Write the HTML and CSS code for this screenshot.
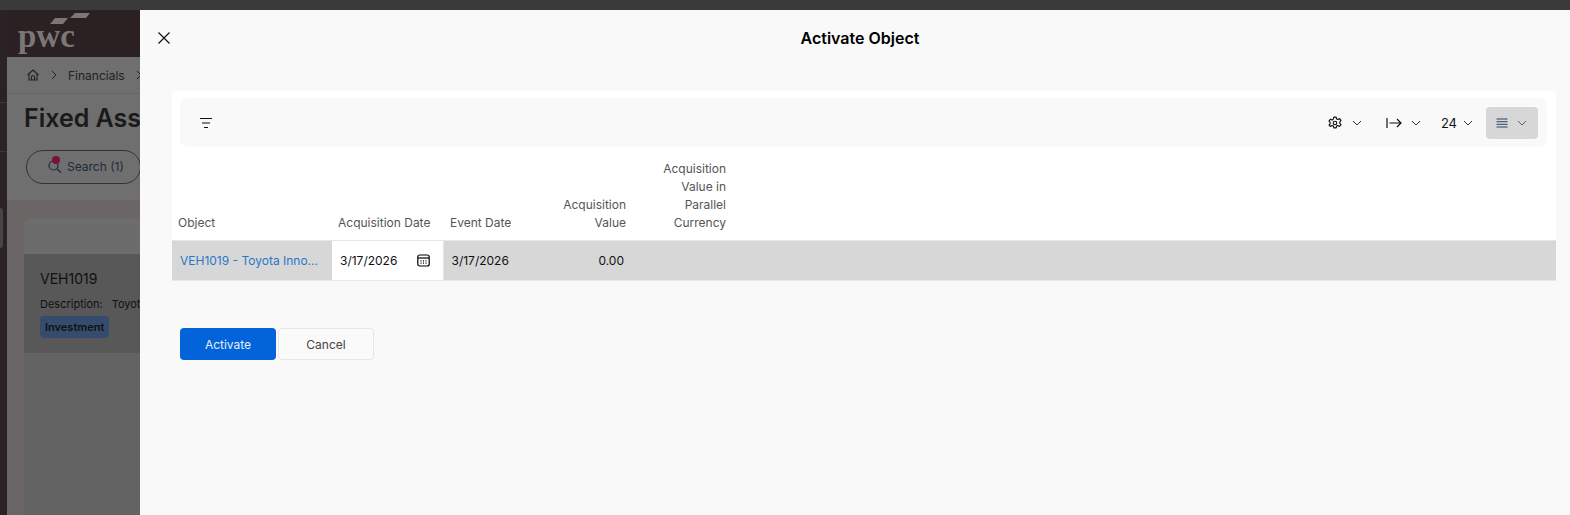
FILE: index.html
```html
<!DOCTYPE html>
<html lang="en">
<head>
<meta charset="utf-8">
<title>Activate Object</title>
<link rel="stylesheet" href="styles.css">
</head>
<body>
<div class="topbar"></div>
<div class="stage">
  <div class="app">
    <div class="rail"><i></i><i></i><b class="rail-tab"></b></div>
    <div class="app-main">
      <header class="brand">
        <svg class="logo" width="84" height="44" viewBox="0 0 84 44"><path d="M57 0h15l-4 5H52zM37 5h13l-5 6H32z" fill="#7c7775"/><text x="0" y="34" class="logo-text">pwc</text></svg>
      </header>
      <nav class="crumbs">
        <svg width="14" height="14" viewBox="0 0 14 14" fill="none" stroke="#222" stroke-width="1.1"><path d="M1.500 7 7 2l5.500 5M3 6v6h8V6M5.500 12V9a1.500 1.500 0 0 1 3 0v3"/></svg>
        <svg width="8" height="10" viewBox="0 0 8 10" fill="none" stroke="#222"><path d="m2 1 4 4-4 4"/></svg>
        <span>Financials</span>
        <svg width="8" height="10" viewBox="0 0 8 10" fill="none" stroke="#222"><path d="m2 1 4 4-4 4"/></svg>
      </nav>
      <h1 class="page-title">Fixed Assets</h1>
      <div class="search-wrap">
        <button class="search-btn">
          <span class="search-icon">
            <svg width="16" height="16" viewBox="0 0 16 16" fill="none" stroke="#1d2a3a" stroke-width="1.200"><circle cx="6.500" cy="7.500" r="4.500"/><path d="m10 11 4 3.500"/></svg>
            <i class="dot"></i>
          </span>
          Search (1)
        </button>
      </div>
      <section class="bg-area">
        <div class="bg-card">
          <div class="bg-card-head"></div>
          <div class="bg-row">
            <div class="bg-id">VEH1019</div>
            <div class="bg-desc"><span>Description:</span><span>Toyota Innova</span></div>
            <span class="tag">Investment</span>
          </div>
        </div>
      </section>
    </div>
  </div>

  <aside class="modal">
    <div class="modal-head">
      <button class="close" aria-label="Close">
        <svg width="14" height="14" viewBox="0 0 14 14" fill="none" stroke="#111" stroke-width="1.200"><path d="m1.500 1.500 11 11M12.500 1.500l-11 11"/></svg>
      </button>
      <h2 class="modal-title">Activate Object</h2>
    </div>
    <div class="panel">
      <div class="toolbar">
        <button class="tool filter" aria-label="Filter">
          <svg width="14" height="12" viewBox="0 0 14 12" fill="none" stroke="#111" stroke-width="1.200"><path d="M1 1.500h12M3 6h8M5 10.500h4"/></svg>
        </button>
        <div class="tools-right">
          <button class="tool tool-gear" aria-label="Settings">
            <svg width="14" height="14" viewBox="0 0 24 24" fill="none" stroke="#111" stroke-width="2"><circle cx="12" cy="12" r="3"/><path d="M10 2h4l.7 3 2.300 1 2.700-1.500 2.600 3.200-2 2.300v2.400l2 2.300-2.600 3.200-2.700-1.500-2.300 1-.7 3h-4l-.7-3-2.300-1-2.700 1.500L1.700 15.700l2-2.300V11l-2-2.300 2.600-3.200L7 7l2.300-2z" stroke-linejoin="round"/></svg>
            <svg class="chev" width="10" height="6" viewBox="0 0 10 6" fill="none" stroke="#333"><path d="m1 1 4 4 4-4"/></svg>
          </button>
          <button class="tool tool-width" aria-label="Column width">
            <svg width="16" height="12" viewBox="0 0 16 12" fill="none" stroke="#111" stroke-width="1.200"><path d="M1 1v10M3.500 6H15M11 2l4 4-4 4"/></svg>
            <svg class="chev" width="10" height="6" viewBox="0 0 10 6" fill="none" stroke="#333"><path d="m1 1 4 4 4-4"/></svg>
          </button>
          <button class="tool tool-size">24
            <svg class="chev" width="10" height="6" viewBox="0 0 10 6" fill="none" stroke="#333"><path d="m1 1 4 4 4-4"/></svg>
          </button>
          <button class="tool tool-density" aria-label="Density">
            <svg width="12" height="10" viewBox="0 0 12 10" fill="none" stroke="#2c4465"><path d="M.5 1h11M.5 3.700h11M.5 6.300h11M.5 9h11"/></svg>
            <svg class="chev" width="10" height="6" viewBox="0 0 10 6" fill="none" stroke="#55647a"><path d="m1 1 4 4 4-4"/></svg>
          </button>
        </div>
      </div>
      <table class="grid">
        <thead>
          <tr>
            <th class="c-object">Object</th>
            <th class="c-acq">Acquisition Date</th>
            <th class="c-event">Event Date</th>
            <th class="c-value num">Acquisition<br>Value</th>
            <th class="c-parallel num">Acquisition<br>Value in<br>Parallel<br>Currency</th>
            <th></th>
          </tr>
        </thead>
        <tbody>
          <tr>
            <td class="c-object"><a class="link">VEH1019 - Toyota Inno...</a></td>
            <td class="c-acq date-cell">
              <div class="date-input">3/17/2026
                <svg width="13" height="13" viewBox="0 0 13 13" fill="none" stroke="#000" stroke-width="1.200"><rect x=".8" y="1" width="11.400" height="11" rx="2"/><path d="M1 4h11"/><path d="M3.500 6.800h1M6 6.800h1M8.500 6.800h1M3.500 9.200h1M6 9.200h1M8.500 9.200h1"/></svg>
              </div>
            </td>
            <td class="c-event">3/17/2026</td>
            <td class="c-value num">0.00</td>
            <td class="c-parallel"></td>
            <td></td>
          </tr>
        </tbody>
      </table>
    </div>
    <div class="actions">
      <button class="btn primary">Activate</button>
      <button class="btn secondary">Cancel</button>
    </div>
  </aside>
</div>
</body>
</html>
```
FILE: styles.css
```css
* { box-sizing: border-box; }
html, body { margin: 0; height: 100%; }
body {
  width: 1570px;
  height: 515px;
  overflow: hidden;
  font-family: Inter, "Liberation Sans", sans-serif;
  background: #6b6b6b;
  display: flex;
  flex-direction: column;
}
button { font: inherit; background: none; border: 0; padding: 0; color: inherit; }
svg { display: block; flex: none; }

.topbar { height: 10px; background: #3a3a3a; flex: none; }
.stage { position: relative; flex: 1; display: flex; min-height: 0; overflow: hidden; }

/* dimmed application behind the drawer */
.app { flex: 1; display: flex; }
.rail { position: relative; width: 7px; background: #2a2224; flex: none; display: flex; flex-direction: column; gap: 48px; padding-top: 92px; }
.rail i { display: block; height: 1px; background: #3e3638; }
.rail-tab { position: absolute; left: 0; top: 198px; width: 3px; height: 40px; background: #4a4445; border-radius: 0 3px 3px 0; }
.app-main { flex: 1; background: #6f6f6f; min-width: 0; }
.brand { height: 47px; background: #2b2022; padding: 3px 0 0 11px; }
.logo-text { font-family: "Liberation Serif", serif; font-size: 33px; font-weight: 700; fill: #7c7775; }
.crumbs {
  height: 37px;
  display: flex;
  align-items: center;
  gap: 10px;
  padding-left: 19px;
  font-size: 12px;
  color: #222;
  border-bottom: 1px solid #656565;
}
.page-title {
  margin: 0;
  height: 56px;
  padding: 8px 0 0 17px;
  font-size: 25px;
  line-height: 32px;
  font-weight: 600;
  color: #1a1a1a;
  white-space: nowrap;
}
.search-wrap { padding-left: 19px; height: 50px; }
.search-btn {
  width: 115px;
  height: 34px;
  border: 1px solid #333;
  border-radius: 17px;
  display: flex;
  align-items: center;
  gap: 4px;
  padding: 0 0 2px 20px;
  font-size: 12px;
  color: #1c2a3c;
  white-space: nowrap;
}
.search-icon { position: relative; display: block; }
.dot { position: absolute; right: 3px; top: -2px; width: 8px; height: 8px; border-radius: 50%; background: #7c1230; }
.bg-area { background: #6a6666; height: 315px; padding: 18px 0 0 17px; }
.bg-card { background: #636363; height: 100%; border-radius: 6px 0 0 0; overflow: hidden; }
.bg-card-head { height: 36px; background: #6c6c6c; }
.bg-row { height: 99px; background: #585858; padding: 15px 0 0 16px; color: #111; white-space: nowrap; overflow: hidden; }
.bg-id { font-size: 14px; line-height: 20px; }
.bg-desc { display: flex; gap: 9px; font-size: 11px; line-height: 16px; margin-top: 7px; }
.tag {
  display: inline-block;
  margin-top: 4px;
  padding: 0 5px;
  height: 22px;
  line-height: 22px;
  font-size: 11px;
  font-weight: 600;
  background: #364c6e;
  border-radius: 4px;
}

/* drawer */
.modal {
  position: absolute;
  left: 140px;
  top: 0;
  right: 0;
  bottom: 0;
  background: #f9f9f9;
  padding: 0 14px 0 32px;
}
.modal-head { position: relative; height: 81px; display: flex; justify-content: center; padding-top: 17px; padding-right: 8px; }
.close { position: absolute; left: -15px; top: 21px; }
.modal-title { margin: 0; font-size: 16px; line-height: 22px; font-weight: 600; color: #000; }
.panel { background: #fff; height: 190px; }
.toolbar {
  margin: 0 9px 0 8px;
  position: relative;
  top: 7px;
  height: 49px;
  background: #f9f9f9;
  border-radius: 8px;
  display: flex;
  align-items: center;
  justify-content: space-between;
  padding: 0 9px 0 19px;
}
.tools-right { display: flex; align-items: center; }
.tool { display: flex; align-items: center; font-size: 13px; color: #111; }
.tool-gear { gap: 10px; margin-right: 24px; }
.tool-width { gap: 9px; margin-right: 20px; }
.tool-size { gap: 6px; margin-right: 13px; }
.tool-density {
  width: 52px;
  height: 32px;
  background: #d7d7d7;
  border-radius: 4px;
  gap: 9px;
  padding-left: 10px;
}
.grid { border-collapse: collapse; width: 100%; table-layout: fixed; margin-top: 7px; font-size: 12px; }
.grid th {
  font-weight: 400;
  color: #555;
  text-align: left;
  vertical-align: bottom;
  line-height: 18px;
  padding: 0 8px 8px 6px;
  height: 93px;
}
.grid th.c-event { padding-left: 7px; }
.grid th.num { text-align: right; padding-right: 8px; }
.grid td {
  height: 40px;
  background: #d7d7d7;
  padding: 0 8px;
  white-space: nowrap;
  overflow: hidden;
  border-top: 1px solid #e6e6e6;
  border-bottom: 1px solid #e6e6e6;
  color: #111;
}
.grid td.num { text-align: right; padding-right: 10px; }
.c-object { width: 160px; }
.c-acq { width: 111px; }
.c-event { width: 90px; }
.c-value { width: 101px; }
.c-parallel { width: 100px; }
.grid td.date-cell { background: #fff; padding: 0; border-right: 1px solid #e6e6e6; }
.date-input { display: flex; align-items: center; justify-content: space-between; padding: 0 13px 0 8px; }
.link { color: #2a77c7; }
.actions { display: flex; gap: 2px; margin: 47px 0 0 8px; }
.btn { height: 32px; width: 96px; border-radius: 4px; font-size: 12px; }
.primary { background: #0264d8; color: #e6f0ff; }
.secondary { background: #fafafa; border: 1px solid #e6e6e6; color: #444; }
```
